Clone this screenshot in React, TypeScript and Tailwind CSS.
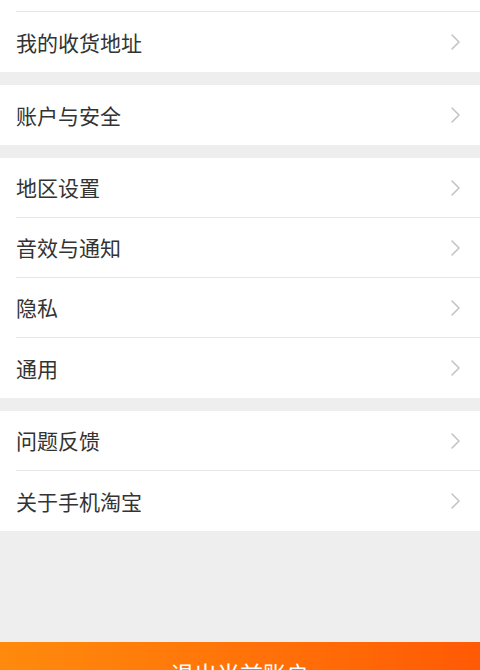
const Chevron = () => (
  <svg width="12" height="18" viewBox="0 0 12 18" fill="none" className="shrink-0">
    <path d="M2 2l7 7-7 7" stroke="#c4c4c4" strokeWidth="1.6" strokeLinecap="round" strokeLinejoin="round" />
  </svg>
);

interface RowProps {
  label: string;
  divider?: boolean;
}

const Row: React.FC<RowProps> = ({ label, divider }) => (
  <div className="bg-white pl-4">
    <div
      className={
        "flex items-center justify-between h-[60px] pr-[18px] " +
        (divider ? "border-b border-[#e6e6e6]" : "")
      }
    >
      <span className="text-[21px] text-[#333333] leading-none">{label}</span>
      <Chevron />
    </div>
  </div>
);

const Gap = () => <div className="h-[13px] bg-[#eeeeee]" />;

export default function App() {
  return (
    <div
      className="w-[480px] h-[670px] overflow-hidden bg-[#eeeeee] flex flex-col"
      style={{ fontFamily: '"Noto Sans CJK SC", "Noto Sans", sans-serif' }}
    >
      <div className="bg-white pl-4">
        <div className="h-[12px] border-b border-[#e6e6e6]" />
      </div>
      <Row label="我的收货地址" />
      <Gap />
      <Row label="账户与安全" />
      <Gap />
      <Row label="地区设置" divider />
      <Row label="音效与通知" divider />
      <Row label="隐私" divider />
      <Row label="通用" />
      <Gap />
      <Row label="问题反馈" divider />
      <Row label="关于手机淘宝" />
      <div className="flex-1" />
      <div className="h-[28px] shrink-0 bg-gradient-to-r from-[#ff8a0d] to-[#ff5a05] flex justify-center overflow-hidden">
        <span className="text-[23px] text-white leading-none pt-[20px] whitespace-nowrap">退出当前账户</span>
      </div>
    </div>
  );
}
